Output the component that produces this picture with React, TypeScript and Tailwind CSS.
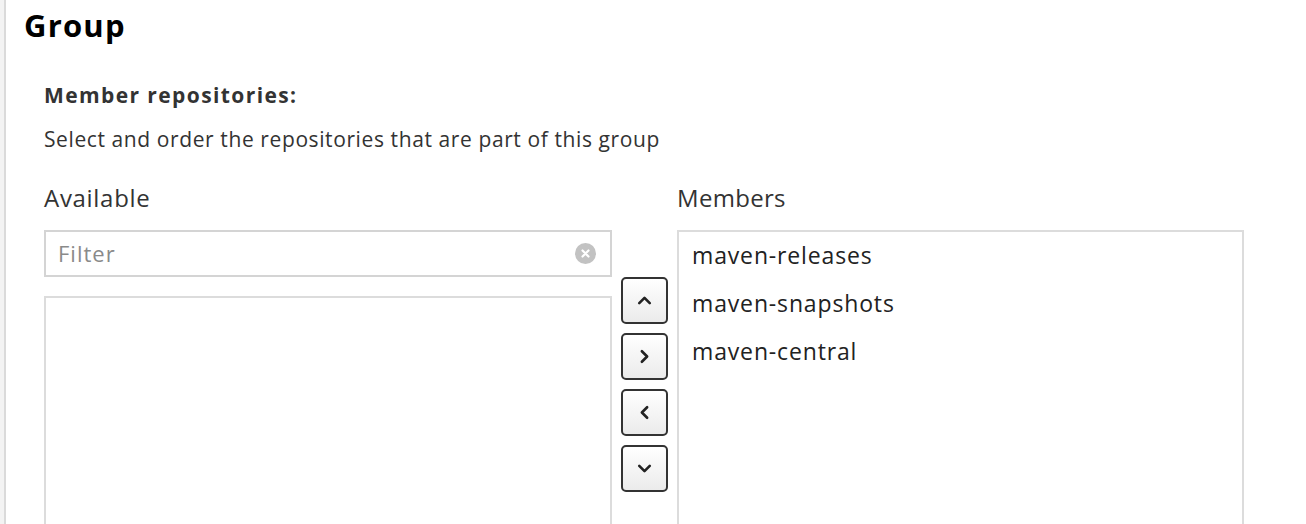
import { ChevronUp, ChevronDown, ChevronLeft, ChevronRight } from "lucide-react";

const members = ["maven-releases", "maven-snapshots", "maven-central"];

function MoveButton({ children }: { children: React.ReactNode }) {
  return (
    <button className="flex h-[47px] w-[47px] items-center justify-center rounded-[5px] border-2 border-[#333] bg-gradient-to-b from-white to-[#ebebeb] text-[#222]">
      {children}
    </button>
  );
}

export default function App() {
  return (
    <div
      className="h-[524px] w-full overflow-hidden bg-[#f3f3f3] pl-[4px]"
      style={{ fontFamily: '"Open Sans", "Liberation Sans", sans-serif' }}
    >
      <div className="h-full border-l-2 border-[#dadada] bg-white">
        <h1 className="pl-[18px] pt-[7px] text-[31px] font-bold leading-[36px] tracking-[1.2px] text-black">Group</h1>

        <div className="pl-[38px] pt-[40px] text-[#333]">
          <h2 className="text-[21px] font-bold leading-[24px] tracking-[1.4px]">Member repositories:</h2>
          <p className="mt-[20px] text-[21px] leading-[24px] tracking-[0.6px]">
            Select and order the repositories that are part of this group
          </p>

          <div className="mt-[33px] flex">
            {/* Available */}
            <div className="flex w-[568px] flex-col">
              <div className="text-[24px] leading-[28px] tracking-[0.7px]">Available</div>
              <div className="mt-[18px] flex h-[47px] items-center border-2 border-[#d4d4d4] pl-[12px] pr-[14px]">
                <span className="flex-1 text-[22px] tracking-[1px] text-[#8a8a8a]">Filter</span>
                <span className="flex h-[21px] w-[21px] items-center justify-center rounded-full bg-[#c2c2c2]">
                  <svg width="9" height="9" viewBox="0 0 9 9">
                    <path d="M1.5 1.5 L7.5 7.5 M7.5 1.5 L1.5 7.5" stroke="white" strokeWidth="2.2" strokeLinecap="round" />
                  </svg>
                </span>
              </div>
              <div className="mt-[19px] h-[300px] border-2 border-[#dcdcdc]" />
            </div>

            {/* Move buttons */}
            <div className="flex w-[65px] flex-col items-center gap-[9px] pt-[93px]">
              <MoveButton>
                <ChevronUp size={21} strokeWidth={3} />
              </MoveButton>
              <MoveButton>
                <ChevronRight size={21} strokeWidth={3} />
              </MoveButton>
              <MoveButton>
                <ChevronLeft size={21} strokeWidth={3} />
              </MoveButton>
              <MoveButton>
                <ChevronDown size={21} strokeWidth={3} />
              </MoveButton>
            </div>

            {/* Members */}
            <div className="flex w-[567px] flex-col">
              <div className="text-[24px] leading-[28px] tracking-[0.3px]">Members</div>
              <div className="mt-[18px] h-[330px] border-2 border-[#dcdcdc] pl-[13px]">
                {members.map((m) => (
                  <div key={m} className="h-[48px] text-[23px] leading-[46px] tracking-[0.85px] text-[#222]">
                    {m}
                  </div>
                ))}
              </div>
            </div>
          </div>
        </div>
      </div>
    </div>
  );
}
